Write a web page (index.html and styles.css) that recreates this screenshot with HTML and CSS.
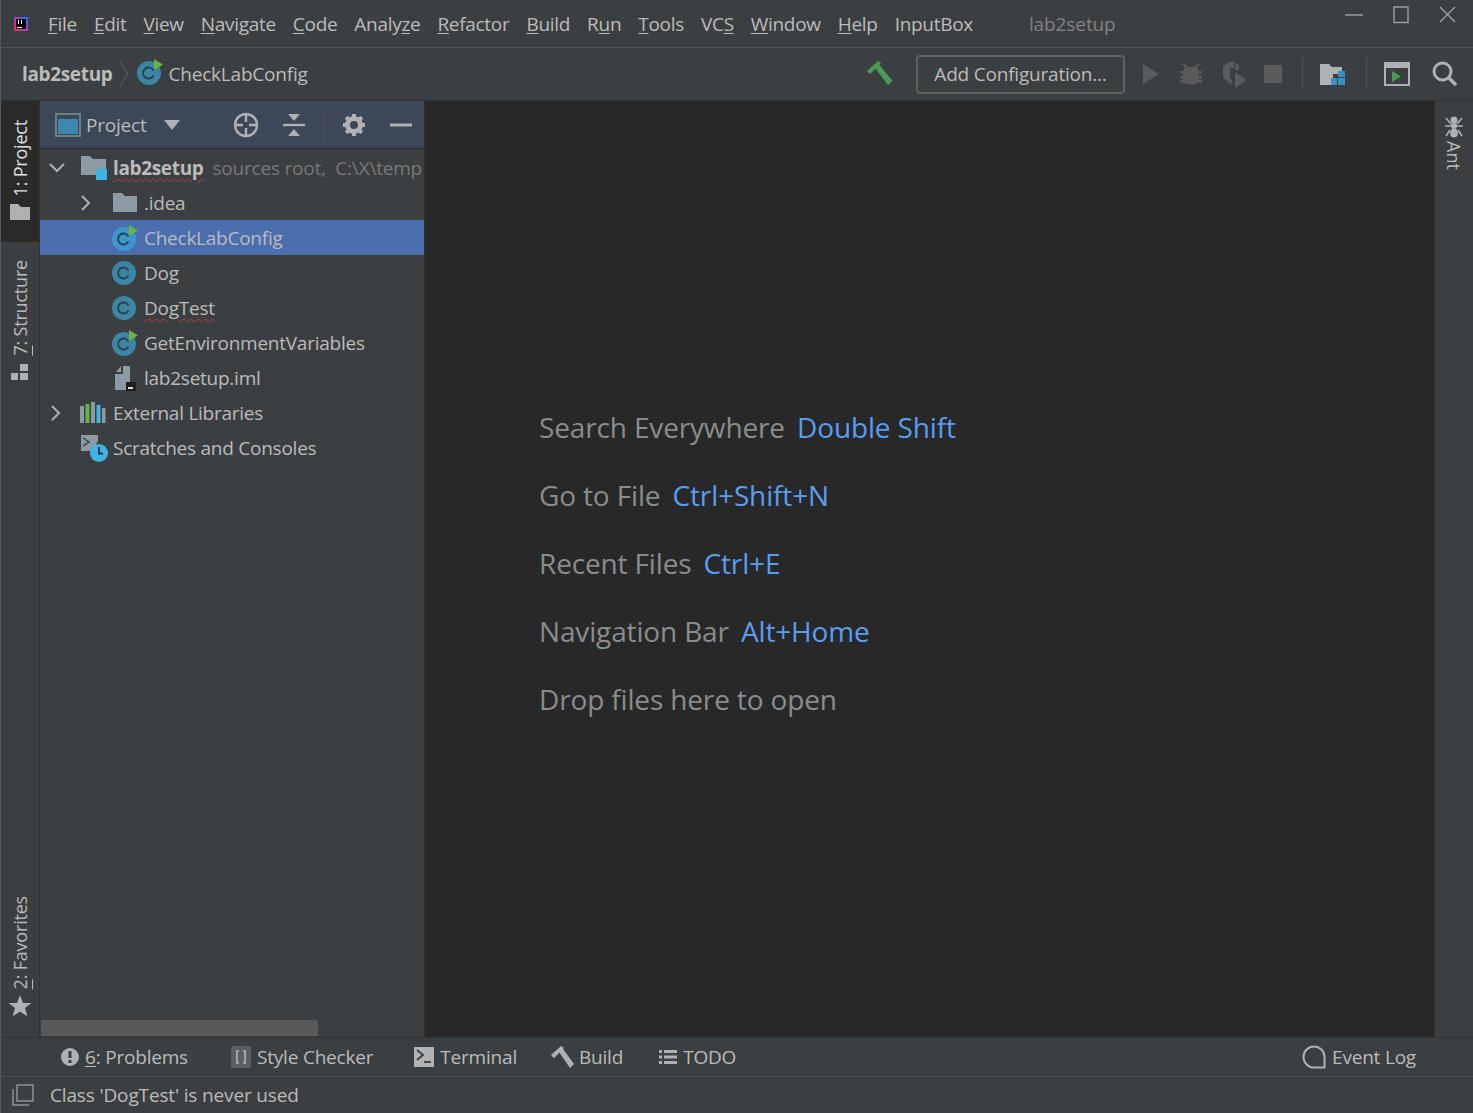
FILE: index.html
```html
<!DOCTYPE html>
<html lang="en">
<head>
<meta charset="utf-8">
<title>lab2setup</title>
<link rel="stylesheet" href="styles.css">
</head>
<body>
<div class="app">
  <header class="titlebar">
    <svg class="logo" width="16" height="16" viewBox="0 0 16 16"><defs><linearGradient id="lg" x1="0" y1="1" x2="1" y2="0"><stop offset="0" stop-color="#fe2857"/><stop offset=".5" stop-color="#b13ec0"/><stop offset="1" stop-color="#087cfa"/></linearGradient></defs><rect x="1" y="1" width="14" height="14" fill="url(#lg)"/><rect x="3" y="3" width="10" height="10" fill="#000"/><rect x="4" y="11" width="5" height="1" fill="#fff"/><rect x="5" y="4" width="1" height="4" fill="#fff"/><rect x="8" y="4" width="1" height="4" fill="#fff"/></svg>
    <nav class="menu">
      <span><u>F</u>ile</span><span><u>E</u>dit</span><span><u>V</u>iew</span><span><u>N</u>avigate</span><span><u>C</u>ode</span><span>Analy<u>z</u>e</span><span><u>R</u>efactor</span><span><u>B</u>uild</span><span>R<u>u</u>n</span><span><u>T</u>ools</span><span>VC<u>S</u></span><span><u>W</u>indow</span><span><u>H</u>elp</span><span>InputBox</span>
    </nav>
    <span class="wintitle">lab2setup</span>
    <div class="winctl">
      <svg width="20" height="20" viewBox="0 0 20 20"><path d="M1 10H19" stroke="#a0a2a4" stroke-width="1.4"/></svg>
      <svg width="20" height="20" viewBox="0 0 20 20"><rect x="3" y="2" width="14" height="15.5" fill="none" stroke="#a0a2a4" stroke-width="1.4"/></svg>
      <svg width="20" height="20" viewBox="0 0 20 20"><path d="M2 2L17 17M17 2L2 17" stroke="#a0a2a4" stroke-width="1.4"/></svg>
    </div>
  </header>

  <div class="toolbar">
    <b class="crumb-root">lab2setup</b>
    <svg class="crumb-sep" width="10" height="28" viewBox="0 0 10 28"><path d="M1 1L8.500 14L1 27" fill="none" stroke="#55585a" stroke-width="1.300"/></svg>
    <svg class="cicon" width="26" height="26" viewBox="0 0 26 26"><circle cx="12" cy="14" r="12" fill="#3b86a4"/><path d="M16.500 11.500A5.500 5.500 0 1 0 16.500 16.500" fill="none" stroke="#2b3e47" stroke-width="1.800"/><path d="M17 0L26 5.500L17 11Z" fill="#6cb33f"/></svg>
    <span class="crumb">CheckLabConfig</span>
    <div class="spring"></div>
    <svg class="ti hammer" width="30" height="28" viewBox="0 0 30 28"><path d="M2 11L13 1L16 3.500L5 14Z M10 8L14 4.500L27.500 21L23 25Z" fill="#499c54"/></svg>
    <div class="addconf">Add Configuration...</div>
    <svg class="ti" width="20" height="26" viewBox="0 0 20 26"><path d="M2 3L18 13L2 23Z" fill="#595b5d"/></svg>
    <svg class="ti" width="26" height="26" viewBox="0 0 26 26"><path d="M6 2L9.500 6H16.500L20 2L21.500 3.500L19 7L21 10H24V12.500H21V15H24V17.500H21V19H24V21.500H20C18 24 8 24 6 21.500H2V19H5V17.500H2V15H5V12.500H2V10H5L7 7L4.500 3.500Z" fill="#595b5d"/></svg>
    <svg class="ti" width="26" height="28" viewBox="0 0 26 28"><path d="M2 6L9 2H13L13 8H9V18L12 22L9 24L2 17Z M14 3L18 5V10H14Z" fill="#595b5d"/><path d="M14 12L25 20L14 28Z" fill="#595b5d"/></svg>
    <svg class="ti" width="18" height="18" viewBox="0 0 18 18"><rect width="18" height="18" fill="#595b5d"/></svg>
    <i class="tsep"></i>
    <svg class="ti" width="26" height="24" viewBox="0 0 26 24"><path d="M0 2H9L12 5H22V12H13V23H0Z" fill="#afb1b3"/><rect x="18" y="9" width="7" height="6" fill="#3592c4"/><rect x="11" y="16" width="6" height="7" fill="#3592c4"/><rect x="18" y="16" width="7" height="7" fill="#3592c4"/></svg>
    <i class="tsep"></i>
    <svg class="ti" width="26" height="24" viewBox="0 0 26 24"><rect x="1" y="1" width="24" height="22" fill="none" stroke="#afb1b3" stroke-width="2"/><rect x="1" y="1" width="24" height="5" fill="#afb1b3"/><path d="M8 9L17 14.500L8 20Z" fill="#499c54"/></svg>
    <svg class="ti search" width="26" height="26" viewBox="0 0 26 26"><circle cx="10.500" cy="10.500" r="8.500" fill="none" stroke="#afb1b3" stroke-width="3"/><path d="M16 16L24 24" stroke="#afb1b3" stroke-width="3.500"/></svg>
  </div>

  <div class="body">
    <aside class="lstripe">
      <div class="stripe-top">
        <div class="vtab active"><svg width="20" height="16" viewBox="0 0 20 16"><path d="M0 0H8L11 3H20V16H0Z" fill="#afb1b3"/></svg><span>1: Project</span></div>
        <div class="vtab structure"><svg width="18" height="16" viewBox="0 0 18 16"><rect x="0" y="9" width="7" height="7" fill="#afb1b3"/><rect x="9" y="9" width="8" height="7" fill="#afb1b3"/><rect x="9" y="0" width="8" height="7" fill="#afb1b3"/></svg><span><u>7</u>: Structure</span></div>
      </div>
      <div class="vtab fav"><svg width="24" height="22" viewBox="0 0 24 22"><path d="M12 0L15 8H23.500L17 13L19.500 21.500L12 16.500L4.500 21.500L7 13L.5 8H9Z" fill="#afb1b3"/></svg><span><u>2</u>: Favorites</span></div>
    </aside>

    <section class="panel">
      <div class="panel-head">
        <svg class="pview" width="26" height="24" viewBox="0 0 26 24"><rect x="1" y="1" width="24" height="22" fill="none" stroke="#6e7f8a" stroke-width="2"/><rect x="3" y="6" width="20" height="15" fill="#3d88ac"/></svg>
        <span class="ptitle">Project</span>
        <svg class="pcaret" width="16" height="10" viewBox="0 0 16 10"><path d="M0 0H16L8 10Z" fill="#afb1b3"/></svg>
        <div class="pspring"></div>
        <svg width="26" height="26" viewBox="0 0 26 26"><circle cx="13" cy="13" r="11" fill="none" stroke="#afb1b3" stroke-width="2.400"/><path d="M13 2V10M13 16V24M2 13H10M16 13H24" stroke="#afb1b3" stroke-width="2.400"/></svg>
        <svg class="pgap1" width="22" height="24" viewBox="0 0 22 24"><path d="M0 12H22" stroke="#afb1b3" stroke-width="2.400"/><path d="M5 1H17L11 8Z M5 23H17L11 16Z" fill="#afb1b3"/></svg>
        <i class="psep"></i>
        <svg width="24" height="24" viewBox="0 0 24 24"><circle cx="12" cy="12" r="6.500" fill="none" stroke="#afb1b3" stroke-width="5"/><path d="M12 1V5M12 19V23M1 12H5M19 12H23M4.200 4.200L7 7M17 17L19.800 19.800M4.200 19.800L7 17M17 7L19.800 4.200" stroke="#afb1b3" stroke-width="4"/></svg>
        <svg class="pgap2" width="24" height="24" viewBox="0 0 24 24"><path d="M1 12H23" stroke="#afb1b3" stroke-width="3"/></svg>
      </div>
      <div class="tree">
        <div class="row d0 root"><svg class="arrow" width="16" height="10" viewBox="0 0 16 10"><path d="M1 1L8 8L15 1" fill="none" stroke="#afb1b3" stroke-width="2"/></svg><svg class="ic" width="28" height="26" viewBox="0 0 28 26"><path d="M1 1H10L13 4H26V20H1Z" fill="#8c9aa3"/><rect x="16" y="14" width="11" height="11" fill="#3db3e6"/></svg><span class="bold wavy">lab2setup</span><span class="hint">sources root,&nbsp; C:\X\temp</span></div>
        <div class="row d1"><svg class="arrow" width="10" height="16" viewBox="0 0 10 16"><path d="M1 1L8 8L1 15" fill="none" stroke="#afb1b3" stroke-width="2"/></svg><svg class="ic" width="26" height="22" viewBox="0 0 26 22"><path d="M1 1H10L13 4H25V20H1Z" fill="#8c9aa3"/></svg><span>.idea</span></div>
        <div class="row d2 selected"><svg class="ic" width="26" height="26" viewBox="0 0 26 26"><circle cx="12" cy="14" r="12" fill="#3c97cf"/><path d="M16.500 11.500A5.500 5.500 0 1 0 16.500 16.500" fill="none" stroke="#2b3e47" stroke-width="1.800"/><path d="M17 0L26 5.500L17 11Z" fill="#6cb33f"/></svg><span>CheckLabConfig</span></div>
        <div class="row d2"><svg class="ic" width="26" height="26" viewBox="0 0 26 26"><circle cx="12" cy="13" r="12" fill="#3b86a4"/><path d="M16.500 10.500A5.500 5.500 0 1 0 16.500 15.500" fill="none" stroke="#2b3e47" stroke-width="1.800"/></svg><span>Dog</span></div>
        <div class="row d2"><svg class="ic" width="26" height="26" viewBox="0 0 26 26"><circle cx="12" cy="13" r="12" fill="#3b86a4"/><path d="M16.500 10.500A5.500 5.500 0 1 0 16.500 15.500" fill="none" stroke="#2b3e47" stroke-width="1.800"/></svg><span class="wavy">DogTest</span></div>
        <div class="row d2"><svg class="ic" width="26" height="26" viewBox="0 0 26 26"><circle cx="12" cy="14" r="12" fill="#3b86a4"/><path d="M16.500 11.500A5.500 5.500 0 1 0 16.500 16.500" fill="none" stroke="#2b3e47" stroke-width="1.800"/><path d="M17 0L26 5.500L17 11Z" fill="#6cb33f"/></svg><span>GetEnvironmentVariables</span></div>
        <div class="row d2"><svg class="ic" width="26" height="26" viewBox="0 0 26 26"><path d="M3 9L11 9L11 1H18V17H14V25H3Z M4 7L9 1V7Z" fill="#8c9aa3"/><rect x="14" y="17" width="10" height="9" fill="#1e1e1e"/><rect x="16" y="22" width="5" height="2" fill="#ddd"/></svg><span>lab2setup.iml</span></div>
        <div class="row d0b"><svg class="arrow" width="10" height="16" viewBox="0 0 10 16"><path d="M1 1L8 8L1 15" fill="none" stroke="#afb1b3" stroke-width="2"/></svg><svg class="ic" width="26" height="22" viewBox="0 0 26 22"><rect x="0" y="4" width="4" height="17" fill="#8c9aa3"/><rect x="5.500" y="2" width="4" height="19" fill="#62b543"/><rect x="11" y="0" width="4" height="21" fill="#8c9aa3"/><rect x="16.500" y="3" width="4" height="18" fill="#3db3e6"/><rect x="22" y="6" width="3.500" height="15" fill="#8c9aa3"/></svg><span>External Libraries</span></div>
        <div class="row d0c"><svg class="ic" width="28" height="28" viewBox="0 0 28 28"><path d="M1 1H18V7L12 17H1Z" fill="#8c9aa3"/><path d="M3 4L9 8L3 12" fill="none" stroke="#3c3f41" stroke-width="1.500"/><circle cx="19" cy="19" r="9" fill="#3db3e6"/><path d="M19 13V19.500H23" fill="none" stroke="#23343c" stroke-width="1.800"/></svg><span>Scratches and Consoles</span></div>
      </div>
      <div class="hscroll"><div class="thumb"></div></div>
    </section>

    <main class="editor">
      <div class="hints">
        <p>Search Everywhere <em>Double Shift</em></p>
        <p>Go to File <em>Ctrl+Shift+N</em></p>
        <p>Recent Files <em>Ctrl+E</em></p>
        <p>Navigation Bar <em>Alt+Home</em></p>
        <p>Drop files here to open</p>
      </div>
    </main>

    <aside class="rstripe">
      <svg width="22" height="22" viewBox="0 0 22 22"><ellipse cx="11" cy="4" rx="3.500" ry="3.500" fill="#afb1b3"/><ellipse cx="11" cy="10" rx="3" ry="3" fill="#afb1b3"/><ellipse cx="11" cy="17" rx="4" ry="4.500" fill="#afb1b3"/><path d="M3 2L8 8M19 2L14 8M2 10H20M3 20L7 14M19 20L15 14" stroke="#afb1b3" stroke-width="1.600" fill="none"/></svg>
      <span class="ant">Ant</span>
    </aside>
  </div>

  <div class="toolwin">
    <div class="tw problems"><svg width="18" height="18" viewBox="0 0 18 18"><circle cx="9" cy="9" r="9" fill="#afb1b3"/><rect x="7.500" y="3" width="3" height="7" fill="#3c3f41"/><rect x="7.500" y="12" width="3" height="3" fill="#3c3f41"/></svg><span><u>6</u>: Problems</span></div>
    <div class="tw style"><svg width="20" height="22" viewBox="0 0 20 22"><rect width="20" height="22" rx="2" fill="#5d6063"/><path d="M8 5H6V17H8M12 5H14V17H12" fill="none" stroke="#a0a2a4" stroke-width="2"/></svg><span>Style Checker</span></div>
    <div class="tw terminal"><svg width="20" height="20" viewBox="0 0 20 20"><rect width="20" height="20" fill="#afb1b3"/><path d="M3 3L9 8L3 13" fill="none" stroke="#3c3f41" stroke-width="1.800"/><path d="M10 15H17" stroke="#3c3f41" stroke-width="1.800"/></svg><span>Terminal</span></div>
    <div class="tw build"><svg width="24" height="22" viewBox="0 0 24 22"><path d="M0 9L10 0L13 2L3 12Z M8 6L12 3L23 18L19 22Z" fill="#afb1b3"/></svg><span>Build</span></div>
    <div class="tw todo"><svg width="18" height="14" viewBox="0 0 18 14"><path d="M0 0H3V3H0Z M0 5.500H3V8.500H0Z M0 11H3V14H0Z M5 0H18V3H5Z M5 5.500H18V8.500H5Z M5 11H18V14H5Z" fill="#afb1b3"/></svg><span>TODO</span></div>
    <div class="spring"></div>
    <div class="tw eventlog"><svg width="24" height="24" viewBox="0 0 24 24"><path d="M22 22.500H12A10.500 10.500 0 1 1 22.500 12V22.500Z" fill="none" stroke="#afb1b3" stroke-width="2"/></svg><span>Event Log</span></div>
  </div>

  <footer class="status">
    <svg width="24" height="24" viewBox="0 0 24 24"><path d="M6 2H22V18H6Z M2 6V22H18" fill="none" stroke="#8f9193" stroke-width="1.500"/></svg>
    <span>Class 'DogTest' is never used</span>
  </footer>
</div>
</body>
</html>
```
FILE: styles.css
```css
* { box-sizing: border-box; }
html, body { margin: 0; height: 100%; overflow: hidden; background: #3c3f41; }
body { font-family: "Open Sans", "Noto Sans", sans-serif; color: #bbbbbb; font-size: 19px; }
svg { display: block; flex: none; }
em { font-style: normal; color: #589df6; margin-left: 5px; }
u { text-underline-offset: 2px; }

.app { width: 1473px; height: 1113px; display: flex; flex-direction: column; border-left: 1px solid #55585a; }

.titlebar { height: 48px; flex: none; display: flex; align-items: center; padding-left: 12px; border-bottom: 1px solid #515456; position: relative; }
.menu { display: flex; gap: 17px; margin-left: 19px; letter-spacing: -.3px; }
.wintitle { margin-left: 56px; color: #808284; letter-spacing: -.1px; }
.winctl { margin-left: auto; display: flex; gap: 27px; margin-right: 15px; margin-top: -18px; }

.toolbar { height: 53px; flex: none; display: flex; align-items: center; padding: 0 15px 0 21px; border-bottom: 1px solid #323232; }
.crumb-root { font-weight: 700; letter-spacing: -.35px; }
.crumb-sep { margin-left: 7px; }
.cicon { margin-left: 8px; margin-top: -4px; }
.crumb { margin-left: 5px; letter-spacing: -.2px; }
.spring { flex: 1; }
.ti { margin-left: 17px; }
.hammer { margin-right: 6px; }
.addconf { height: 39px; width: 209px; margin-left: 15px; margin-right: -1px; border: 2px solid #5e6060; border-radius: 4px; display: flex; align-items: center; justify-content: center; letter-spacing: -.2px; }
.tsep { width: 1px; height: 32px; background: #515456; margin-left: 20px; margin-right: 0; }
.search { margin-left: 22px; }

.body { flex: 1; display: flex; min-height: 0; }
.lstripe { width: 39px; flex: none; display: flex; flex-direction: column; justify-content: space-between; border-right: 1px solid #323232; }
.stripe-top { display: flex; flex-direction: column; gap: 18px; }
.vtab { display: flex; flex-direction: column-reverse; align-items: center; gap: 8px; padding: 16px 0 22px; }
.vtab span { writing-mode: vertical-rl; transform: rotate(180deg); font-size: 18px; line-height: 24px; letter-spacing: -.2px; }
.vtab.active { background: #2a2a2a; color: #e0e0e0; height: 141px; }
.vtab.structure { padding: 0; }
.vtab.fav { padding: 0 0 20px; gap: 6px; }

.panel { width: 385px; flex: none; display: flex; flex-direction: column; border-right: 1px solid #323232; min-width: 0; }
.panel-head { height: 48px; flex: none; background: #3c4858; display: flex; align-items: center; padding: 0 11px 0 15px; border-bottom: 1px solid #323232; }
.ptitle { margin-left: 5px; letter-spacing: -.2px; }
.pcaret { margin-left: 17px; }
.pspring { width: 61px; }
.pgap1 { margin-left: 24px; }
.psep { width: 1px; height: 32px; background: #515456; margin-left: 18px; margin-right: 18px; }
.pgap2 { margin-left: 23px; }

.tree { flex: 1; padding-top: 1px; overflow: hidden; }
.row { height: 35px; display: flex; align-items: center; white-space: nowrap; overflow: hidden; letter-spacing: -.25px; position: relative; }
.row .ic { margin-right: 6px; }
.d0 { padding-left: 9px; }
.d0 .ic { margin-left: 15px; margin-right: 5px; }
.d1 { padding-left: 41px; }
.d1 .ic { margin-left: 21px; margin-right: 6px; }
.d2 { padding-left: 72px; }
.d0b { padding-left: 11px; }
.d0b .ic { margin-left: 19px; margin-right: 7px; }
.d0c { padding-left: 40px; }
.d0c .ic { margin-right: 5px; }
.selected { background: #4b6eaf; }
.bold { font-weight: 700; letter-spacing: -.35px; }
.wavy { text-decoration: underline wavy #bc3f3c 1px; text-underline-offset: 3px; }
.hint { color: #787878; margin-left: 9px; letter-spacing: -.2px; }

.hscroll { height: 17px; flex: none; display: flex; align-items: stretch; padding-left: 1px; padding-bottom: 1px; }
.thumb { width: 277px; background: #565859; }

.editor { flex: 1; background: #282828; display: flex; flex-direction: column; justify-content: center; padding-left: 114px; min-width: 0; }
.hints { padding-bottom: 12px; }
.hints p { margin: 0; height: 68px; display: flex; align-items: center; font-size: 28px; color: #8a8c8d; letter-spacing: -.15px; white-space: pre; }

.rstripe { width: 39px; flex: none; display: flex; flex-direction: column; align-items: center; padding-top: 15px; gap: 3px; border-left: 1px solid #323232; }
.ant { writing-mode: vertical-rl; font-size: 18px; }

.toolwin { height: 40px; flex: none; display: flex; align-items: center; padding: 0 57px 0 60px; border-top: 1px solid #323232; border-bottom: 1px solid #4d4d4d; letter-spacing: -.2px; }
.tw { display: flex; align-items: center; gap: 6px; }
.style { margin-left: 43px; }
.terminal { margin-left: 41px; }
.build { margin-left: 34px; gap: 4px; }
.todo { margin-left: 36px; }

.status { height: 36px; flex: none; display: flex; align-items: center; padding-left: 10px; gap: 15px; letter-spacing: -.15px; }
```
